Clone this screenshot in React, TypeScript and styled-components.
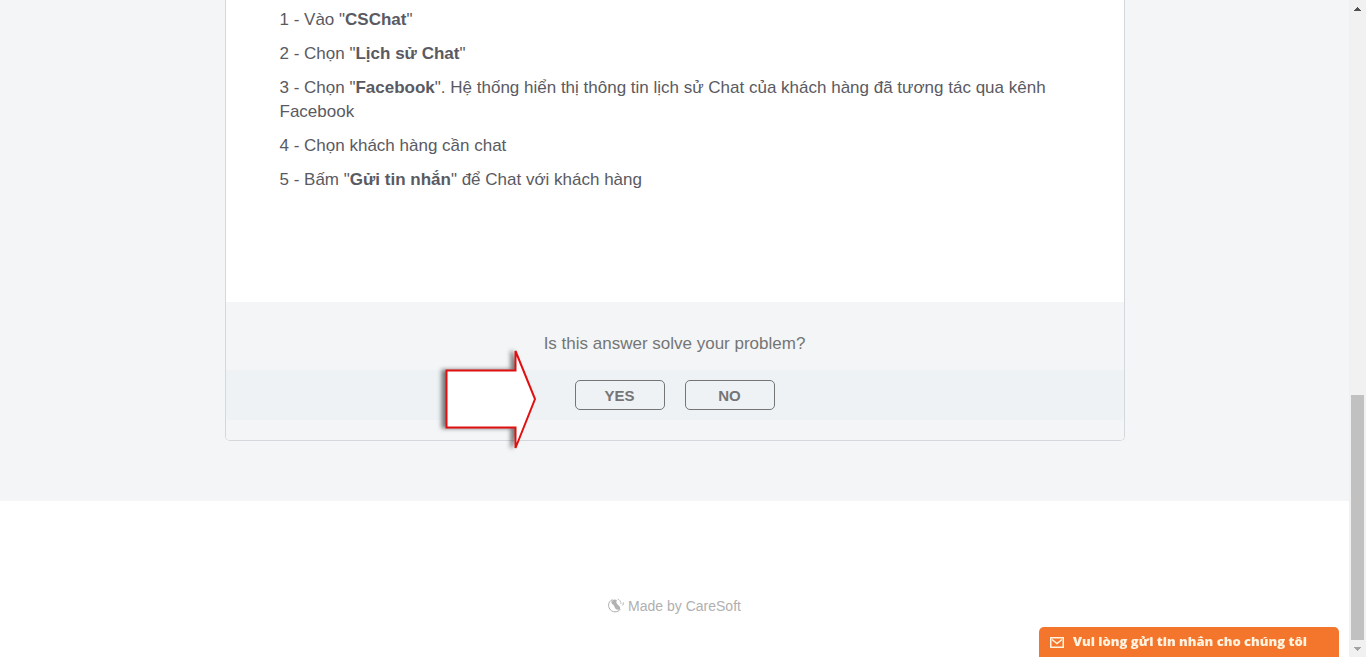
import React from 'react';
import styled, { createGlobalStyle } from 'styled-components';

const GlobalStyle = createGlobalStyle`
  * { box-sizing: border-box; }
  body {
    margin: 0;
    background: #ffffff;
    font-family: "Liberation Sans", Arial, sans-serif;
  }
`;

const Layout = styled.div`
  display: flex;
  height: 100vh;
  overflow: hidden;
`;

const Page = styled.div`
  display: flex;
  flex: 1;
  flex-direction: column;
  min-width: 0;
`;

const Content = styled.main`
  padding: 0 24px 60px;
  background: #f3f5f7;
`;

const Card = styled.section`
  position: relative;
  max-width: 900px;
  margin: 0 auto;
  border: 1px solid #d4d8dd;
  border-top: 0;
  border-radius: 0 0 5px 5px;
  background: #ffffff;
`;

const Article = styled.article`
  padding: 8px 54px 110px;
  color: #5a5a62;
  font-size: 17px;
  line-height: 24px;
`;

const Step = styled.p`
  margin: 0 0 10px;

  &:last-child { margin-bottom: 0; }
`;

const Feedback = styled.div`
  padding: 30px 0 20px;
  border-radius: 0 0 4px 4px;
  background: #f3f5f7;
  text-align: center;
`;

const Question = styled.p`
  margin: 0 0 14px;
  color: #757575;
  font-size: 17px;
  line-height: 24px;
`;

const Answers = styled.div`
  display: flex;
  justify-content: center;
  gap: 20px;
  padding: 10px;
  border-radius: 0 0 4px 4px;
  background: #eef2f5;
`;

const AnswerButton = styled.button`
  width: 90px;
  height: 30px;
  padding: 1px 0 0;
  border: 1px solid #757575;
  border-radius: 5px;
  background: transparent;
  color: #757575;
  font: bold 15px/28px "Liberation Sans", Arial, sans-serif;
  cursor: pointer;
`;

const Arrow = styled.svg`
  position: absolute;
  bottom: -16px;
  left: 208px;
  width: 112px;
  height: 116px;
  overflow: visible;
  filter: drop-shadow(-4px 0 2px rgba(0, 0, 0, 0.5));
  pointer-events: none;
`;

const Footer = styled.footer`
  display: flex;
  flex: 1;
  justify-content: center;
  padding-top: 93px;
`;

const Credit = styled.a`
  display: flex;
  align-items: center;
  gap: 4px;
  height: 24px;
  color: #b0b0b0;
  font-size: 14px;
  line-height: 24px;
  text-decoration: none;
`;

const ChatTab = styled.button`
  position: fixed;
  right: 27px;
  bottom: 0;
  display: flex;
  align-items: center;
  gap: 9px;
  width: 300px;
  height: 30px;
  padding: 0 11px;
  border: 0;
  border-radius: 5px 5px 0 0;
  background: #f4762d;
  color: #fff3df;
  font: 800 13px/28px "Open Sans", Tahoma, sans-serif;
  white-space: nowrap;
  cursor: pointer;
`;

const ChatLabel = styled.span`
  height: 30px;
`;

const ScrollTrack = styled.div`
  display: flex;
  flex-direction: column;
  align-items: center;
  justify-content: space-between;
  width: 17px;
  background: #f1f1f1;
`;

const ScrollThumb = styled.div`
  width: 13px;
  height: 245px;
  margin-top: auto;
  background: #c1c1c1;
`;

const ScrollArrow = ({ up }: { up?: boolean }) => (
  <svg width="17" height="17" viewBox="0 0 17 17" shapeRendering="crispEdges" aria-hidden="true">
    <path d={up ? 'M8 7h1v1h1v1h1v1h1v1H5v-1h1V9h1V8h1z' : 'M5 7h7v1h-1v1h-1v1H9v1H8v-1H7V9H6V8H5z'} fill={up ? '#505050' : '#a3a3a3'} />
  </svg>
);

const CareSoftLogo = () => (
  <svg width="16" height="16" viewBox="0 0 16 16" fill="none" aria-hidden="true">
    <path d="M4.500 1.600C2 2.600.6 4.700.6 7.200c0 3.800 2.900 6.600 6.400 6.600 2.400 0 4.200-1 5.400-2.800" stroke="#ababab" strokeWidth="1" />
    <path d="M3.500 3.500C4.500 1.500 7.500.9 9 2.300C7.800 3.800 8.300 5 9.600 6.500c1.300 1.500 3.300 2.600 2.500 4.200-.8 1.300-2.900 1.500-4.300.4-1.500-1.200-1-2.700-2.300-4C4.300 6.200 2.800 5 3.500 3.500z" fill="#b2b2b2" />
    <path d="M9.500 1c2.400.9 3.600 2.600 3.500 5" stroke="#c6c6c6" strokeWidth="1" />
    <path d="M15.200 4.500c.4 1.200 0 2.200-.9 2.900" stroke="#a8a8a8" strokeWidth="1" />
  </svg>
);

const MailIcon = () => (
  <svg width="14" height="11" viewBox="0 0 14 11" fill="none" stroke="#fff3df" strokeWidth="1.500" aria-hidden="true">
    <rect x=".75" y=".75" width="12.500" height="9.500" />
    <path d="M2 2.500 7 6.500 12 2.500" />
  </svg>
);

export default function App() {
  return (
    <>
      <GlobalStyle />
      <Layout>
        <Page>
          <Content>
            <Card>
              <Article>
                <Step>1 - Vào "<b>CSChat</b>"</Step>
                <Step>2 - Chọn "<b>Lịch sử Chat</b>"</Step>
                <Step>
                  3 - Chọn "<b>Facebook</b>". Hệ thống hiển thị thông tin lịch sử Chat của khách hàng đã tương tác qua kênh Facebook
                </Step>
                <Step>4 - Chọn khách hàng cần chat</Step>
                <Step>5 - Bấm "<b>Gửi tin nhắn</b>" để Chat với khách hàng</Step>
              </Article>
              <Feedback>
                <Question>Is this answer solve your problem?</Question>
                <Answers>
                  <AnswerButton type="button">YES</AnswerButton>
                  <AnswerButton type="button">NO</AnswerButton>
                </Answers>
              </Feedback>
              <Arrow viewBox="0 0 112 116" aria-hidden="true">
                <path d="M12.500 30.500h69V11l19.500 48-19.500 49V87.500h-69z" fill="#fff" stroke="#e01010" strokeWidth="2" />
              </Arrow>
            </Card>
          </Content>
          <Footer>
            <Credit href="#">
              <CareSoftLogo />
              Made by CareSoft
            </Credit>
          </Footer>
        </Page>
        <ScrollTrack>
          <ScrollArrow up />
          <ScrollThumb />
          <ScrollArrow />
        </ScrollTrack>
      </Layout>
      <ChatTab type="button">
        <MailIcon />
        <ChatLabel>Vui lòng gửi tin nhắn cho chúng tôi</ChatLabel>
      </ChatTab>
    </>
  );
}
